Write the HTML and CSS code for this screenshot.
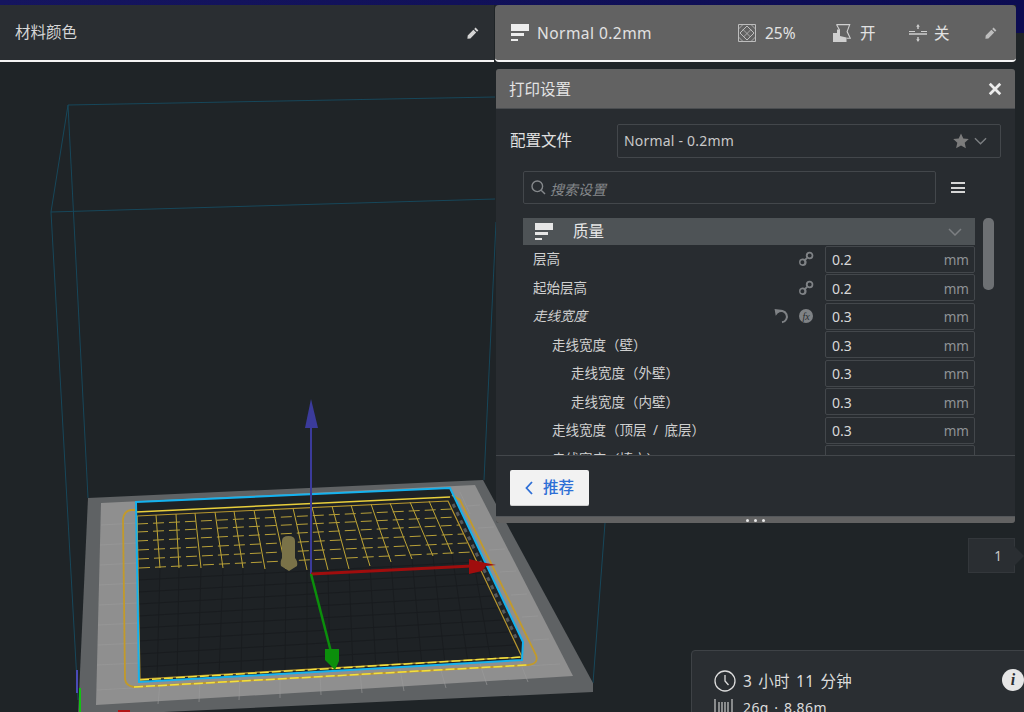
FILE: index.html
```html
<!DOCTYPE html>
<html lang="zh">
<head>
<meta charset="utf-8">
<title>打印设置</title>
<link rel="stylesheet" href="styles.css">
</head>
<body>
<svg width="0" height="0" class="defs">
  <symbol id="i-profile" viewBox="0 0 18 18"><path fill="currentColor" d="M0 0h18v7H0zM0 9h13v3H0zM0 15h7v2H0z"/></symbol>
  <symbol id="i-pencil" viewBox="0 0 12 12"><path fill="currentColor" d="M8.6.6 11.4 3.4 10 4.8 7.2 2zM6.4 2.800 9.200 5.600 3.400 11.400.4 11.800.7 8.600z"/></symbol>
  <symbol id="i-link" viewBox="0 0 14 14"><path fill="currentColor" fill-rule="evenodd" d="M3.800 6.500a3.300 3.300 0 1 0 3.700 3.700 3.300 3.300 0 0 0-3.700-3.700zm.1 1.600a1.700 1.700 0 1 1-.1 3.400 1.700 1.700 0 0 1 .1-3.400zM10.200.6a3.300 3.300 0 1 0 3.200 3.700A3.300 3.300 0 0 0 10.200.6zm0 1.600a1.700 1.700 0 1 1 0 3.400 1.700 1.700 0 0 1 0-3.400z"/><path fill="none" stroke="currentColor" stroke-width="1.600" d="M6 8 8 6"/></symbol>
</svg>
<div class="app">
  <div class="strip"></div>
  <header class="topbar">
    <section class="materials">
      <span class="materials-label">材料颜色</span>
      <svg class="pencil"><use href="#i-pencil"/></svg>
    </section>
    <section class="summary-bar">
      <svg class="bar-profile"><use href="#i-profile"/></svg>
      <span class="bar-name">Normal 0.2mm</span>
      <span class="bar-item bar-infill">
        <svg class="ico18" viewBox="0 0 18 18"><g fill="none" stroke="currentColor"><path stroke-width="1" d="M.5.5h17v17H.5z"/><path stroke-width="1" d="M9 2 16 9 9 16 2 9z"/><path stroke-width=".8" d="M.5 5 5 .5M13 .5 17.500 5M17.500 13 13 17.500M5 17.500.5 13M5 5.500 12.500 13M13 5.500 5.500 13"/></g></svg>
        <span>25%</span>
      </span>
      <span class="bar-item bar-support">
        <svg class="ico18" viewBox="0 0 18 18"><path fill="currentColor" d="M0 9h4V5.500h3V12l6.500 1.500V18H0z"/><path fill="none" stroke="currentColor" stroke-width="1.100" d="M3.500.6h13.200l-2.600 7 3.200 6.600-3.700 0M3.500.6l3 5.400"/></svg>
        <span>开</span>
      </span>
      <span class="bar-item bar-adhesion">
        <svg class="ico18" viewBox="0 0 18 18"><path fill="none" stroke="currentColor" stroke-width="1" d="M0 7.500h6M12 7.500h6"/><path fill="none" stroke="currentColor" stroke-width="1.500" d="M0 10h18"/><path fill="currentColor" d="M9 0 10.800 2.800H9.700V5H8.300V2.800H7.200zM9 18 7.200 15.200H8.300V13H9.700V15.200H10.800z"/></svg>
        <span>关</span>
      </span>
      <svg class="pencil bar-pencil"><use href="#i-pencil"/></svg>
    </section>
    <div class="top-end"></div>
  </header>

  <main class="stage">
    <svg class="scene" viewBox="0 62 1024 650" preserveAspectRatio="none">
      <g class="volume">
        <path d="M68 105 495 97M51 212 495 199M68 105 51 212M68 105 88 498M51 212 78 700M496 222 484 480M605 523 593 683"/>
      </g>
      <polygon fill="#5f6264" points="88,498 483,480 593,683 593,692 78,716"/>
      <polygon fill="#8f8f8f" points="101,503 475,485 573,676 96,705"/>
      <polygon fill="#1e2225" points="136,502 450,488 523,642 523,660 139,682"/>
      <g class="bedgrid">
        <path d="M160 568 157 680M179 568 177 679M201 568 198 678M223 568 219 677M243 568 241 676M265 569 263 675M286 569 285 674M307 570 307 672M328 570 330 671M349 569 353 670M370 566 376 669M391 562 399 667M412 559 422 666M433 556 445 664M452 554 468 663M472 552 491 662M138 580 476 562M138 592 482 573M138 604 487 584M138 616 492 596M138 628 498 608M138 641 503 620M139 654 509 632M139 667 515 645"/>
      </g>
      <g class="lightgrid">
        <path d="M101 525 136 523M100 545 136 543M100 565 136 563M99 585 137 583M99 605 137 603M98 625 138 623M98 645 138 643M97 665 139 663M97 690 560 664M160 683 158 704M200 681 199 702M240 678 239 700M280 676 280 698M320 674 321 695M360 671 362 693M400 669 404 691M440 667 446 688M480 664 487 685M520 662 528 682M460 492 470 514M467 506 480 505M478 528 494 527M489 550 505 549M500 572 516 571M511 595 527 594M522 617 538 616M533 640 549 639"/>
      </g>
      <path class="hatch" d="M453 504 518 642"/>
      <g class="infill-v">
        <path d="M137 516 138 569M156 515 160 568M176 514 179 568M195 513 201 568M215 512 223 568M234 511 243 568M254 510 265 569M273 509 286 569M293 508 307 570M312 507 328 570M332 506 349 569M351 505 370 566M371 504 391 562M390 503 412 559M410 502 433 556M429 501 452 554"/>
      </g>
      <g class="infill-h">
        <path d="M137 524 452 509M137 532 456 517M137 541 460 525M138 550 463 534M138 559 467 543M139 568 472 552"/>
      </g>
      <path class="brim-top" d="M136 512 450 497"/>
      <path class="inner-edge" d="M137 516 448 501 522 657 140 679z"/>
      <path class="brim-side" d="M136 510H131Q124 511 123 519L125 679Q126 686 134 687L528 665Q539 664 536 655L460 500 452 495"/>
      <path class="brim-dash" d="M134 687 528 665M140 680 522 657"/>
      <path class="blue-rim" d="M136 502 450 488 523 642 522 660 139 682z"/>
      <g class="model">
        <path d="M282 541Q282 536 288.500 536T295 541V558Q298 561 297 566L289 571 281 566Q280 561 282 558z"/>
      </g>
      <path class="axis-z" d="M311 574V426"/>
      <polygon class="axis-z-fill" points="311,399 318,428 305,428"/>
      <path class="axis-x" d="M311 574 472 566"/>
      <polygon class="axis-x-fill" points="469,559 481,562 496,565 486,566 482,571 469,574"/>
      <path class="axis-y" d="M311 574 331 652"/>
      <polygon class="axis-y-fill" points="325,649 339,649 339,661 335,670 325,660"/>
      <path class="mini-z" d="M77 670V693"/>
      <path class="mini-y" d="M80 688V712"/>
      <path class="mini-x" d="M118 711H130"/>
    </svg>

    <section class="print-panel">
      <h2 class="panel-head">
        <span>打印设置</span>
        <svg class="close" viewBox="0 0 12 12"><path d="M1.500 1.500 10.500 10.500M10.500 1.500 1.500 10.500"/></svg>
      </h2>
      <div class="panel-body">
        <div class="profile-row">
          <span class="profile-label">配置文件</span>
          <div class="select">
            <span class="select-text">Normal - 0.2mm</span>
            <svg class="star" viewBox="0 0 16 16"><path fill="currentColor" d="M8 .5 10.300 5.500 15.800 6.100 11.700 9.800 12.900 15.300 8 12.500 3.100 15.300 4.300 9.800.2 6.100 5.700 5.500z"/></svg>
            <svg class="chev" viewBox="0 0 14 8"><path d="M1 1 7 7 13 1"/></svg>
          </div>
        </div>
        <div class="search-row">
          <div class="search">
            <svg class="search-ico" viewBox="0 0 15 15"><circle cx="6.300" cy="6.300" r="5.300"/><path d="M10.200 10.200 14 14"/></svg>
            <span>搜索设置</span>
          </div>
          <span class="menu"><i></i><i></i><i></i></span>
        </div>
        <div class="tree">
          <div class="list">
            <div class="category">
              <svg class="cat-ico"><use href="#i-profile"/></svg>
              <span class="cat-name">质量</span>
              <svg class="cat-chev" viewBox="0 0 14 8"><path d="M1 1 7 7 13 1"/></svg>
            </div>
            <div class="row"><span class="name">层高</span><svg class="act"><use href="#i-link"/></svg><div class="field"><span>0.2</span><span class="unit">mm</span></div></div>
            <div class="row"><span class="name">起始层高</span><svg class="act"><use href="#i-link"/></svg><div class="field"><span>0.2</span><span class="unit">mm</span></div></div>
            <div class="row"><span class="name em">走线宽度</span>
              <svg class="act undo" viewBox="0 0 14 14"><path fill="none" stroke="currentColor" stroke-width="1.800" d="M3 3.800A5 5 0 1 1 7 12.500"/><path fill="currentColor" d="M.5.8 6 1.500 1.500 6.800z"/></svg>
              <span class="fx"><i>fx</i></span>
              <div class="field"><span>0.3</span><span class="unit">mm</span></div></div>
            <div class="row l1"><span class="name">走线宽度（壁）</span><div class="field"><span>0.3</span><span class="unit">mm</span></div></div>
            <div class="row l2"><span class="name">走线宽度（外壁）</span><div class="field"><span>0.3</span><span class="unit">mm</span></div></div>
            <div class="row l2"><span class="name">走线宽度（内壁）</span><div class="field"><span>0.3</span><span class="unit">mm</span></div></div>
            <div class="row l1"><span class="name">走线宽度（顶层 / 底层）</span><div class="field"><span>0.3</span><span class="unit">mm</span></div></div>
            <div class="row l1"><span class="name">走线宽度（填充）</span><div class="field"><span>0.3</span><span class="unit">mm</span></div></div>
          </div>
          <div class="scrollbar"></div>
        </div>
      </div>
      <div class="panel-foot">
        <button class="back" type="button">
          <svg viewBox="0 0 8 14"><path d="M7 1 1.500 7 7 13"/></svg>
          <span>推荐</span>
        </button>
      </div>
      <div class="resize"><i></i><i></i><i></i></div>
    </section>

    <div class="layer-badge">1</div>

    <section class="print-info">
      <div class="info-row">
        <svg class="clock" viewBox="0 0 22 22"><circle cx="11" cy="11" r="10"/><path d="M11 5V11L14.500 15"/></svg>
        <span>3 小时 11 分钟</span>
        <span class="info-dot">i</span>
      </div>
      <div class="info-row second">
        <svg class="spool" viewBox="0 0 20 18"><path d="M1 0V18M5 3V18M8 3V18M11 3V18M14 3V18M18 0V18"/></svg>
        <span>26g · 8.86m</span>
      </div>
    </section>
  </main>
</div>
</body>
</html>
```
FILE: styles.css
```css
* { box-sizing: border-box; }
html, body { margin: 0; padding: 0; }
body {
  background: #1f2427;
  color: #d8d8d8;
  font-family: "Noto Sans", "Noto Sans CJK SC", sans-serif;
  overflow: hidden;
}
.defs { position: absolute; }
.app { width: 1024px; height: 712px; display: flex; flex-direction: column; overflow: hidden; }
.strip { height: 5px; flex: none; background: linear-gradient(90deg, #15155f, #0c0c52); }

.topbar { height: 57px; flex: none; display: flex; background: #1f2427; position: relative; z-index: 2; }
.materials {
  width: 494px; display: flex; align-items: center; justify-content: space-between;
  padding: 0 15px 0 15px; background: #2a2e32; border-bottom: 2px solid #f4f4f4;
}
.materials-label { font-size: 15.500px; color: #d6d6d6; padding-bottom: 2px; }
.pencil { width: 12px; height: 12px; color: #d4d4d4; }
.summary-bar {
  width: 521px; margin-left: 1px; display: flex; align-items: center; padding: 0 14px 0 16px;
  background: #626262; border-bottom: 2px solid #f4f4f4; border-radius: 4px;
  color: #e2e2e2;
}
.bar-profile { width: 18px; height: 18px; margin-right: 8px; color: #ededed; }
.bar-name { font-size: 15.500px; letter-spacing: .45px; width: 201px; }
.bar-item { display: flex; align-items: center; font-size: 15.500px; }
.ico18 { width: 18px; height: 18px; color: #bdbdbd; flex: none; }
.bar-infill { gap: 9px; width: 95px; }
.bar-support { gap: 9px; width: 76px; }
.bar-adhesion { gap: 7px; width: 76px; }
.bar-support svg, .bar-adhesion svg { color: #cfcfcf; }
.bar-pencil { color: #bdbdbd; }
.top-end { flex: none; width: 8px; height: 28px; background: #0c0c52; }

.stage { flex: 1; position: relative; }
.scene { position: absolute; inset: 0; width: 1024px; height: 650px; }
.volume path { fill: none; stroke: #17475a; stroke-width: 1; }
.bedgrid path { fill: none; stroke: #191c1f; stroke-width: 1; }
.lightgrid path { fill: none; stroke: #9a9a9a; stroke-width: .6; }
.hatch { stroke: #55585a; stroke-width: 3; stroke-dasharray: 4 5; fill: none; }
.infill-v path { fill: none; stroke: #bfa535; stroke-width: 1; }
.infill-h path { fill: none; stroke: #b8a038; stroke-width: 1; stroke-dasharray: 11 5; }
.brim-top { stroke: #e9cf3c; stroke-width: 1.500; fill: none; }
.inner-edge { stroke: #b8972e; stroke-width: 1.200; fill: none; }
.brim-side { stroke: #c29a2a; stroke-width: 1.800; fill: none; }
.brim-dash { stroke: #f2e040; stroke-width: 1.500; fill: none; stroke-dasharray: 9 3; }
.blue-rim { stroke: #14b2ef; stroke-width: 2; fill: none; }
.model path { fill: #7a7248; }
.axis-z { stroke: #3b3b9b; stroke-width: 2; }
.axis-z-fill { fill: #3b3b9b; }
.axis-x { stroke: #a00d0d; stroke-width: 3; }
.axis-x-fill { fill: #a00d0d; }
.axis-y { stroke: #0b8f0b; stroke-width: 2.500; }
.axis-y-fill { fill: #0b8f0b; }
.mini-z { stroke: #4a4ab8; stroke-width: 2; }
.mini-y { stroke: #14c014; stroke-width: 2; }
.mini-x { stroke: #b01515; stroke-width: 2; }

.print-panel {
  position: absolute; left: 496px; top: 7px; width: 519px; height: 454px;
  display: flex; flex-direction: column; background: #282c30;
  border-radius: 3px; overflow: hidden;
}
.panel-head {
  margin: 0; height: 40px; flex: none; display: flex; align-items: center; justify-content: space-between;
  padding: 0 13px 0 13px; background: #626262; font-weight: 400; font-size: 15.500px; color: #e4e4e4;
  border-bottom: 1px solid #4a4d50;
}
.close { width: 14px; height: 14px; }
.close path { stroke: #ececec; stroke-width: 2.400; fill: none; }
.panel-body { flex: none; height: 346px; display: flex; flex-direction: column; }
.profile-row { margin-top: 15px; height: 34px; flex: none; display: flex; align-items: center; padding-left: 14px; }
.profile-label { width: 107px; font-size: 15.500px; color: #e0e0e0; padding-bottom: 3px; }
.select {
  width: 384px; height: 34px; display: flex; align-items: center; padding: 0 13px 0 6px;
  border: 1px solid #43474b; border-radius: 2px; font-size: 14px; color: #c8c8c8;
}
.select-text { flex: 1; letter-spacing: .2px; padding-bottom: 1px; }
.star { width: 16px; height: 16px; color: #7c7c7c; margin-right: 5px; }
.chev { width: 13px; height: 8px; }
.chev path, .cat-chev path { fill: none; stroke: #7c7f82; stroke-width: 1.500; }
.search-row { margin-top: 13px; height: 33px; flex: none; display: flex; align-items: center; padding-left: 27px; }
.search {
  width: 413px; height: 33px; display: flex; align-items: center; gap: 4px; padding-left: 7px;
  border: 1px solid #43474b; border-radius: 2px; font-size: 14px; font-style: italic; color: #85888b;
}
.search span { padding-top: 2px; }
.search-ico { width: 15px; height: 15px; }
.search-ico circle, .search-ico path { fill: none; stroke: #85888b; stroke-width: 1.400; }
.menu { margin-left: 15px; width: 14px; display: flex; flex-direction: column; gap: 2.500px; }
.menu i { display: block; height: 2px; background: #d6d6d6; }
.tree { margin-top: 14px; flex: 1; min-height: 0; display: flex; padding-left: 27px; overflow: hidden; }
.list { width: 452px; flex: none; }
.category {
  height: 27px; display: flex; align-items: center; padding: 0 13px 0 12px;
  background: #4e5356; color: #e6e6e6; font-size: 15.500px;
}
.cat-name { flex: 1; margin-left: 20px; padding-bottom: 2px; }
.cat-ico { width: 18px; height: 18px; }
.cat-chev { width: 14px; height: 8px; }
.row { height: 28.500px; display: flex; align-items: center; padding-left: 10px; font-size: 13.500px; color: #cfcfcf; }
.row.l1 { padding-left: 29px; }
.row.l2 { padding-left: 48px; }
.name { flex: 1; padding-bottom: 2px; word-spacing: 3px; }
.em { font-style: italic; }
.act { width: 16px; height: 16px; color: #7f8285; margin-right: 11px; }
.undo { margin-right: 9px; }
.fx {
  width: 14px; height: 14px; border-radius: 50%; background: #7f8285; color: #282c30; margin-right: 12px;
  display: flex; align-items: center; justify-content: center; font-size: 10px; font-family: "Liberation Serif", serif;
}
.field {
  width: 150px; height: 27px; flex: none; display: flex; align-items: center; justify-content: space-between;
  padding: 1px 5px 0 6px; border: 1px solid #43474b; border-radius: 2px; font-size: 14px; color: #d8d8d8;
}
.unit { color: #8f9296; font-size: 13.500px; padding-top: 1px; }
.scrollbar { width: 11px; height: 72px; margin-left: 8px; border-radius: 5px; background: #6d7073; flex: none; }
.panel-foot { flex: 1; border-top: 1px solid #43474b; padding: 14px 14px 0; }
.back {
  width: 79px; height: 36px; display: flex; align-items: center; justify-content: center; gap: 10px; padding: 0;
  background: #f2f2f2; border: 0; border-bottom: 1px solid #cfcfcf; border-radius: 2px;
  color: #2e6fd6; font: 500 15.500px "Noto Sans", "Noto Sans CJK SC", sans-serif;
}
.back span { padding-bottom: 2px; }
.back svg { width: 8px; height: 14px; }
.back path { fill: none; stroke: #2e6fd6; stroke-width: 1.800; }
.resize { height: 7px; flex: none; background: #626262; border-top: 1px solid #54575a; display: flex; justify-content: center; align-items: center; gap: 5px; }
.resize i { width: 3px; height: 3px; border-radius: 50%; background: #e8e8e8; }

.layer-badge {
  position: absolute; left: 968px; top: 476px; width: 47px; height: 35px;
  background: #2a2e32; border: 1px solid #33373b; color: #c8c8c8; font-size: 13.500px;
  display: flex; align-items: center; justify-content: center; padding-left: 13px;
}
.layer-badge::after {
  content: ""; position: absolute; right: -10px; top: 7px; width: 0; height: 0;
  border-left: 10px solid #2a2e32; border-top: 10px solid transparent; border-bottom: 10px solid transparent;
}
.print-info {
  position: absolute; left: 691px; top: 588px; width: 340px; height: 70px;
  background: #2a2e32; border: 1px solid #3e4246; border-radius: 4px 0 0 0;
  padding: 18px 0 0 22px; font-size: 15.500px; color: #dcdcdc;
}
.info-row { display: flex; align-items: center; height: 24px; }
.info-row > span:not(.info-dot) { letter-spacing: .4px; word-spacing: 1.500px; padding-bottom: 2px; }
.info-row.second { margin-top: 3px; font-size: 14px; }
.clock { width: 22px; height: 22px; margin-right: 7px; flex: none; }
.clock circle, .clock path { fill: none; stroke: #dcdcdc; stroke-width: 1.300; }
.spool { width: 20px; height: 18px; margin-right: 9px; flex: none; }
.spool path { stroke: #c8c8c8; stroke-width: 1.200; fill: none; }
.info-dot {
  position: absolute; left: 310px; top: 18px; width: 22px; height: 22px; border-radius: 50%;
  background: #e6e6e6; color: #2a2e32; font: italic 700 16px/22px "Liberation Serif", serif; text-align: center;
}
```
